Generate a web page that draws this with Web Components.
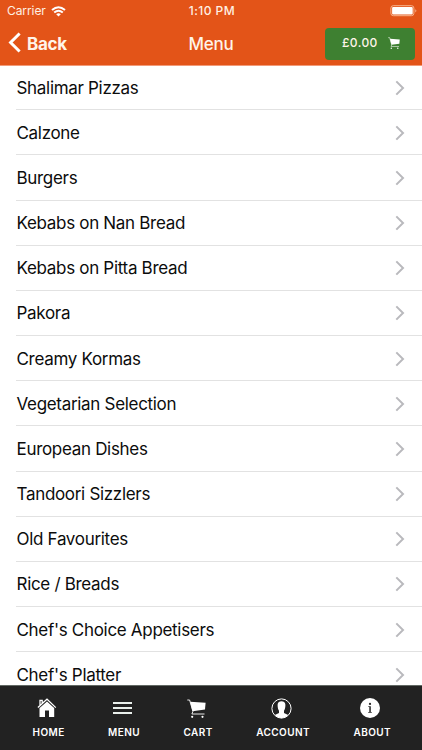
<!DOCTYPE html>
<html lang="en">
<head>
<meta charset="utf-8">
<title>Menu</title>
<style>
html, body { margin: 0; height: 100%; overflow: hidden; background: #fff; }
body { font-family: Inter, "Liberation Sans", sans-serif; }
</style>
</head>
<body>
<menu-app></menu-app>
<script>
const define = (name, html) => {
  const template = document.createElement('template');
  template.innerHTML = html;
  customElements.define(name, class extends HTMLElement {
    constructor() {
      super();
      this.attachShadow({ mode: 'open' }).append(template.content.cloneNode(true));
    }
  });
};

define('status-bar', `
<style>
:host { display: grid; grid-template-columns: 1fr auto 1fr; align-items: center; height: 22px; color: #fff0e3; font-size: 12px; line-height: 14px; padding: 0 5px 0 7px; }
.left { display: flex; align-items: center; gap: 5px; letter-spacing: -.08px; }
.time { font-weight: 500; letter-spacing: .45px; }
svg { display: block; }
.battery { justify-self: end; }
</style>
<div class="left"><span>Carrier</span>
<svg width="15" height="11" viewBox="0 0 15 11" fill="none" stroke="#fff" stroke-width="2"><path d="M1 4.1Q7.5-1.5 14 4.1M3.2 6.6Q7.5 3 11.8 6.6"/><path d="M7.5 10.5L5.2 8.2Q7.5 6.5 9.8 8.2Z" fill="#fff" stroke="none"/></svg></div>
<span class="time">1:10 PM</span>
<svg class="battery" width="27" height="12" viewBox="0 0 27 12"><rect x=".9" y=".7" width="23" height="10" rx="2.4" fill="none" stroke="#f8b48e" stroke-width="1"/><rect x="2.1" y="1.9" width="20.6" height="7.6" rx="1" fill="#fff"/><path d="M25.3 4.2Q27.5 5.8 25.3 7.4Z" fill="#f8b48e"/></svg>`);

define('cart-icon', `
<style>:host { display: block; width: 19px; height: 19px; } svg { display: block; width: 100%; height: 100%; }</style>
<svg viewBox="0 0 19 19"><path d="M3.1 2.8L18.6 3.8L18 10.6L5.5 12.2Z" fill="#fff"/><path d="M.3 1H2.6L5.9 12.4L4.9 15H17.5" fill="none" stroke="#fff" stroke-width=".9"/><circle cx="5.2" cy="17.8" r="1.1" fill="#fff"/><circle cx="15.5" cy="17.8" r="1.1" fill="#fff"/></svg>`);

define('nav-bar', `
<style>
:host { display: grid; grid-template-columns: 1fr auto 1fr; align-items: center; height: 43px; padding: 0 7px 0 8px; color: #fff4e9; font-size: 17px; }
.back { display: flex; align-items: center; gap: 6px; font-weight: 700; letter-spacing: -.25px; }
svg { display: block; }
.back svg { margin-top: -2px; }
.title { font-weight: 500; letter-spacing: -.3px; margin-left: -1px; }
.basket { justify-self: end; display: flex; align-items: center; box-sizing: border-box; width: 90px; height: 32px; padding: 0 15px 2px 17px; justify-content: space-between; background: #3e8031; border-radius: 4px; font-size: 12px; font-weight: 500; letter-spacing: .4px; }
cart-icon { width: 12px; height: 12px; margin-top: 1px; }
</style>
<div class="back"><svg width="13" height="21" viewBox="0 0 13 21"><path d="M11.6 1.5L2.6 10.5L11.6 19.5" fill="none" stroke="#fff" stroke-width="3"/></svg><span>Back</span></div>
<span class="title">Menu</span>
<div class="basket"><span>£0.00</span><cart-icon></cart-icon></div>`);

define('menu-row', `
<style>
:host { display: flex; align-items: center; justify-content: space-between; flex: none; box-sizing: border-box; height: 45.17px; margin-left: 16px; padding: 1px 17px 0 .5px; border-bottom: 1px solid #e2e2e2; font-size: 17px; color: #0c0c0c; letter-spacing: -.31px; }
svg { display: block; }
</style>
<slot></slot>
<svg width="10" height="16" viewBox="0 0 10 16"><path d="M1.3 1.4L8 8L1.3 14.6" fill="none" stroke="#b9b9bd" stroke-width="2"/></svg>`);

define('tab-item', `
<style>
:host { display: flex; flex-direction: column; align-items: center; gap: 7px; color: #fff; font-size: 10px; font-weight: 600; line-height: 14px; letter-spacing: .42px; }
.icon { display: grid; place-items: center; height: 20px; margin-right: 3.5px; }
span { margin-right: -.42px; }
::slotted(svg) { display: block; }
</style>
<div class="icon"><slot name="icon"></slot></div><span><slot></slot></span>`);

define('tab-bar', `
<style>
:host { display: flex; box-sizing: border-box; height: 65px; flex: none; padding: 12px 0 0 32.5px; gap: 43.9px; background: #222; border-top: 1px solid #616863; }
</style>
<tab-item><svg slot="icon" width="20" height="20" viewBox="0 0 20 20"><path d="M2.5 10L10 3.4L17.2 10V19H12V12.5H8V19H2.5Z" fill="#fff"/><path d="M.9 9.6L10 1.2L18.8 9.6M3 7V2.3H5.2V5" fill="none" stroke="#fff" stroke-width="1.3"/><path d="M1.8 10.2L10 2.7L18 10.2" fill="none" stroke="#444" stroke-width=".6"/></svg>Home</tab-item>
<tab-item><svg slot="icon" width="19" height="14" viewBox="0 0 19 14"><path d="M0 2H19M0 7H19M0 12H19" stroke="#e9efeb" stroke-width="1.8"/></svg>Menu</tab-item>
<tab-item><cart-icon slot="icon"></cart-icon>Cart</tab-item>
<tab-item><svg slot="icon" width="21" height="21" viewBox="0 0 21 21"><circle cx="10.5" cy="10.5" r="9.6" fill="none" stroke="#fff" stroke-width="1"/><path d="M6.6 6.8C6.6 2.2 14.4 2.2 14.4 6.8C14.4 9.8 13.8 11.8 13 12.8V15L17.2 17Q10.5 23.6 3.8 17L8 15V12.8C7.2 11.8 6.6 9.8 6.6 6.8Z" fill="#fff"/></svg>Account</tab-item>
<tab-item><svg slot="icon" width="20" height="20" viewBox="0 0 20 20"><circle cx="10" cy="10" r="10" fill="#fff"/><circle cx="10" cy="5.9" r="1.1" fill="#222"/><path d="M8.3 8.2H10.8V14H11.8V14.7H8.2V14H9.3V8.9H8.3Z" fill="#222"/></svg>About</tab-item>`);

define('menu-app', `
<style>
:host { display: flex; flex-direction: column; width: 422px; height: 750px; overflow: hidden; }
header { flex: none; background: #e35418; border-bottom: 1px solid #f29a78; }
main { flex: 1; min-height: 0; overflow: hidden; display: flex; flex-direction: column; margin-top: -.9px; }
tab-bar { text-transform: uppercase; }
</style>
<header><status-bar></status-bar><nav-bar></nav-bar></header>
<main>${['Shalimar Pizzas','Calzone','Burgers','Kebabs on Nan Bread','Kebabs on Pitta Bread','Pakora','Creamy Kormas','Vegetarian Selection','European Dishes','Tandoori Sizzlers','Old Favourites','Rice / Breads',"Chef's Choice Appetisers","Chef's Platter"].map(n => `<menu-row>${n}</menu-row>`).join('')}</main>
<tab-bar></tab-bar>`);
</script>
</body>
</html>
